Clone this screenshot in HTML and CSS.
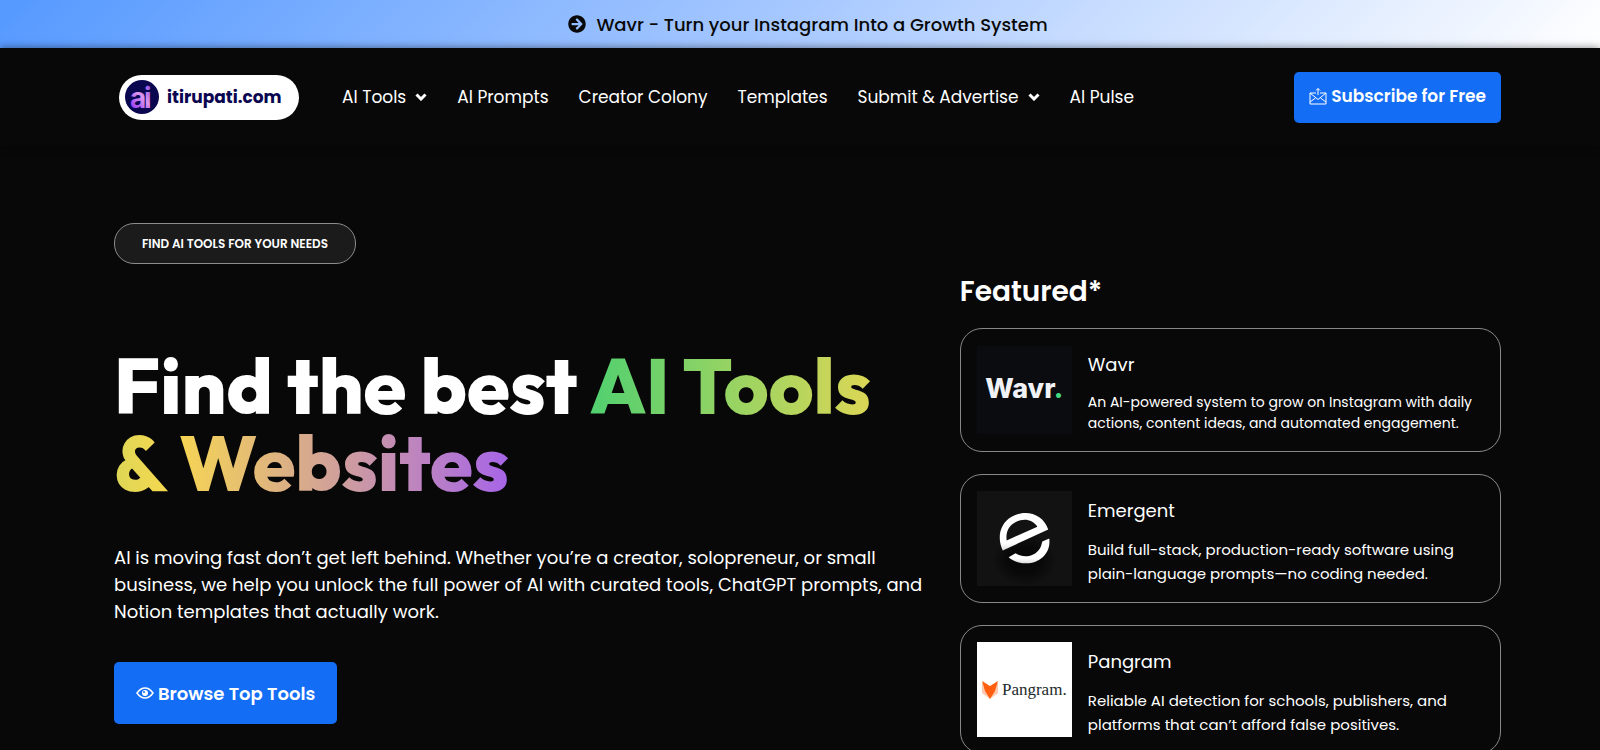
FILE: index.html
```html
<!DOCTYPE html>
<html lang="en">
  <head>
    <meta charset="utf-8">
    <meta name="viewport" content="width=device-width, initial-scale=1">
    <title>itirupati.com - Find the best AI Tools &amp; Websites</title>
    <link rel="stylesheet" href="styles.css">
  </head>
  <body>
    <a class="announcement" href="#wavr">
      <svg class="announcement-icon" viewBox="0 0 512 512" aria-hidden="true"><path fill="currentColor" d="M256 8c137 0 248 111 248 248S393 504 256 504 8 393 8 256 119 8 256 8zm-29 141l76 75H120c-13 0-24 11-24 24v16c0 13 11 24 24 24h183l-76 75c-10 10-10 25 0 35l11 11c9 9 24 9 34 0l135-136c9-9 9-24 0-34L272 103c-10-9-25-9-34 0l-11 11c-10 10-10 25 0 35z"/></svg>
      <span>Wavr - Turn your Instagram Into a Growth System</span>
    </a>

    <header class="site-header">
      <a class="logo" href="#">
        <svg class="logo-mark" viewBox="0 0 36 36" aria-hidden="true">
          <defs>
            <linearGradient id="mark" gradientUnits="userSpaceOnUse" x1="8" y1="28" x2="28" y2="8">
              <stop offset="0" stop-color="#9a3ff5"/>
              <stop offset="0.500" stop-color="#dc96ee"/>
              <stop offset="1" stop-color="#8f50e8"/>
            </linearGradient>
          </defs>
          <circle cx="18" cy="18" r="17" fill="#0b0650"/>
          <text class="logo-letters" y="29" fill="url(#mark)"><tspan x="6">a</tspan><tspan x="20">i</tspan></text>
        </svg>
        <span>itirupati.com</span>
      </a>
      <nav class="main-nav">
        <ul>
          <li><a href="#">AI Tools <svg class="caret" viewBox="0 0 12 8" aria-hidden="true"><path d="M1.500 1.500L6 6L10.500 1.500"/></svg></a></li>
          <li><a href="#">AI Prompts</a></li>
          <li><a href="#">Creator Colony</a></li>
          <li><a href="#">Templates</a></li>
          <li><a href="#">Submit &amp; Advertise <svg class="caret" viewBox="0 0 12 8" aria-hidden="true"><path d="M1.500 1.500L6 6L10.500 1.500"/></svg></a></li>
          <li><a href="#">AI Pulse</a></li>
        </ul>
      </nav>
      <a class="button button-subscribe" href="#">
        <svg class="mail-icon" viewBox="0 0 18 18" aria-hidden="true"><path d="M7 6H1V17H17V6H11M1 6L9 12.500L17 6M1 15L6.500 11M17 15L11.500 11M9 8V1.500M7 3.500L9 1.500L11 3.500"/></svg>
        Subscribe for Free
      </a>
    </header>

    <main class="hero">
      <section class="intro">
        <p class="tag">FIND AI TOOLS FOR YOUR NEEDS</p>
        <h1>Find the best <span class="gradient">AI Tools<br>&amp; Websites</span></h1>
        <p class="lead">AI is moving fast don’t get left behind. Whether you’re a creator, solopreneur, or small business, we help you unlock the full power of AI with curated tools, ChatGPT prompts, and Notion templates that actually work.</p>
        <a class="button button-browse" href="#">
          <svg class="eye-icon" viewBox="0 0 18 12" aria-hidden="true"><path d="M1 6Q4.500 1 9 1T17 6Q13.500 11 9 11T1 6Z"/><circle class="pupil" cx="9" cy="6" r="3"/><circle class="glint" cx="8" cy="5" r="1"/></svg>
          Browse Top Tools
        </a>
      </section>

      <section class="featured">
        <h2>Featured*</h2>

        <article class="card card-compact" id="wavr">
          <div class="thumb thumb-wavr"><div>Wavr<span>.</span></div></div>
          <div class="card-text">
            <h3>Wavr</h3>
            <p>An AI-powered system to grow on Instagram with daily actions, content ideas, and automated engagement.</p>
          </div>
        </article>

        <article class="card">
          <div class="thumb thumb-emergent">
            <svg viewBox="0 0 96 96" aria-hidden="true">
              <defs>
                <linearGradient id="metal" x1="0" y1="0" x2="0" y2="1">
                  <stop offset="0.800" stop-color="#fff"/>
                  <stop offset="1" stop-color="#ddd"/>
                </linearGradient>
                <radialGradient id="shade">
                  <stop offset="0.500" stop-color="#080808"/>
                  <stop offset="1" stop-color="#121212"/>
                </radialGradient>
              </defs>
              <ellipse cx="48" cy="70" rx="32" ry="26" fill="url(#shade)"/>
              <path fill="url(#metal)" fill-rule="evenodd" d="M26 60C20 47 23 33 35 26C49 18 67 23 72 39L26 60ZM30 50L61 36C56 28 46 27 38 32C31 36 29 43 30 50Z"/>
              <path fill="url(#metal)" d="M73 48C75 63 63 74 48 73C41 73 35 70 32 67L39 63C47 68 57 66 62 60C65 57 65 54 66 51Z"/>
            </svg>
          </div>
          <div class="card-text">
            <h3>Emergent</h3>
            <p>Build full-stack, production-ready software using plain-language prompts—no coding needed.</p>
          </div>
        </article>

        <article class="card">
          <div class="thumb thumb-pangram">
            <svg class="fox" viewBox="0 0 16 18" aria-hidden="true">
              <path fill="#ffc9b0" d="M0 1L8 18L16 1V12L8 18L0 12Z"/>
              <path fill="#ff5f0f" d="M0 0L8 5L16 0L13 10L8 18L3 10Z"/>
            </svg>
            <span>Pangram.</span>
          </div>
          <div class="card-text">
            <h3>Pangram</h3>
            <p>Reliable AI detection for schools, publishers, and platforms that can’t afford false positives.</p>
          </div>
        </article>
      </section>
    </main>
  </body>
</html>
```
FILE: styles.css
```css
* {
    box-sizing: border-box;
}
body {
    margin: 0;
    background: #080808;
    color: #fff;
    font-family: Poppins, Inter, sans-serif;
}
a {
    color: inherit;
    text-decoration: none;
}
h1, h2, h3, p, ul {
    margin: 0;
    padding: 0;
}

.announcement {
    display: flex;
    align-items: center;
    justify-content: center;
    gap: 10px;
    height: 48px;
    padding-left: 16px;
    background: linear-gradient(135deg, #5599ff 0%, #a5c7ff 48%, #fff 100%);
    color: #080808;
    font-size: 18px;
    font-weight: 500;
}
.announcement-icon {
    width: 18px;
    height: 18px;
}

.site-header {
    display: flex;
    align-items: center;
    position: relative;
    height: 98px;
    padding: 0 99px 0 119px;
    background: #080808;
    box-shadow: 0 0 8px rgba(0, 0, 0, 0.5);
}
.logo {
    display: flex;
    align-items: center;
    gap: 7px;
    width: 180px;
    height: 45px;
    padding-left: 5px;
    border-radius: 23px;
    background: #fff;
    color: #0b0650;
    font-size: 17px;
    font-weight: 700;
}
.logo-mark {
    width: 36px;
    height: 36px;
}
.logo-letters {
    font-family: Inter, sans-serif;
    font-size: 28px;
    font-weight: 700;
}
.main-nav {
    margin-left: 43px;
    font-size: 17px;
}
.main-nav ul {
    display: flex;
    gap: 30px;
    list-style: none;
}
.main-nav a {
    display: flex;
    align-items: center;
    gap: 9px;
    white-space: nowrap;
}
.caret {
    width: 12px;
    height: 8px;
    fill: none;
    stroke: #fff;
    stroke-width: 3;
}

.button {
    display: inline-flex;
    align-items: center;
    justify-content: center;
    gap: 4px;
    border-radius: 5px;
    background: #146ef5;
    font-weight: 600;
    white-space: nowrap;
}
.button-subscribe {
    height: 51px;
    margin-left: auto;
    padding: 0 15px 2px;
    font-size: 17px;
}
.button-browse {
    height: 62px;
    padding: 0 22px;
    font-size: 18px;
}
.mail-icon {
    width: 18px;
    height: 18px;
    fill: none;
    stroke: #fff;
}
.eye-icon {
    width: 18px;
    height: 12px;
    fill: none;
    stroke: #fff;
    stroke-width: 1.5;
}
.pupil {
    fill: #fff;
    stroke: none;
}
.glint {
    fill: #146ef5;
    stroke: none;
}

.hero {
    display: grid;
    grid-template-columns: minmax(0, 150fr) minmax(0, 100fr);
    gap: 34px;
    padding: 77px 99px 22px 114px;
}
.tag {
    display: inline-block;
    padding: 0 27px;
    border: 1px solid #8c8c8c;
    border-radius: 20px;
    background: #1b1b1b;
    font-size: 12px;
    font-weight: 600;
    line-height: 39px;
}
h1 {
    margin-top: 83px;
    font-family: Outfit, Inter, sans-serif;
    font-size: 77px;
    font-weight: 800;
    line-height: 77px;
    white-space: nowrap;
}
.gradient {
    background: linear-gradient(90deg, #50d070, #f8d850 50%, #a765e8);
    background-clip: text;
    -webkit-background-clip: text;
    color: transparent;
}
.lead {
    margin: 43px 0 37px;
    font-size: 18px;
    line-height: 27px;
}

.featured {
    padding-top: 47px;
}
.featured h2 {
    margin-bottom: 14px;
    font-size: 28px;
    font-weight: 600;
    line-height: 44px;
}
.card {
    display: flex;
    gap: 16px;
    margin-bottom: 22px;
    padding: 16px;
    border: 1px solid #888;
    border-radius: 22px;
}
.card-compact {
    padding: 17px 16px;
}
.thumb {
    display: flex;
    flex: none;
    align-items: center;
    justify-content: center;
    width: 95px;
    height: 95px;
}
.card-compact .thumb {
    height: 88px;
}
.thumb-wavr {
    padding-bottom: 4px;
    background: #0a0c0f;
    color: #f0f2f5;
    font-family: Inter, sans-serif;
    font-size: 27px;
    font-weight: 800;
}
.thumb-wavr span {
    color: #45d880;
}
.thumb-emergent {
    background: #121212;
}
.thumb-pangram {
    gap: 4px;
    background: #fff;
    color: #1c2b2b;
    font-family: "Liberation Serif", serif;
    font-size: 17px;
}
.fox {
    width: 16px;
    height: 18px;
}
.card-text h3 {
    margin-top: 6px;
    font-size: 18px;
    font-weight: 400;
    line-height: 27px;
}
.card-text p {
    margin-top: 14px;
    font-size: 15px;
    line-height: 24px;
}
.card-compact h3 {
    margin-top: 5px;
}
.card-compact p {
    font-size: 14px;
    line-height: 21px;
}
```
